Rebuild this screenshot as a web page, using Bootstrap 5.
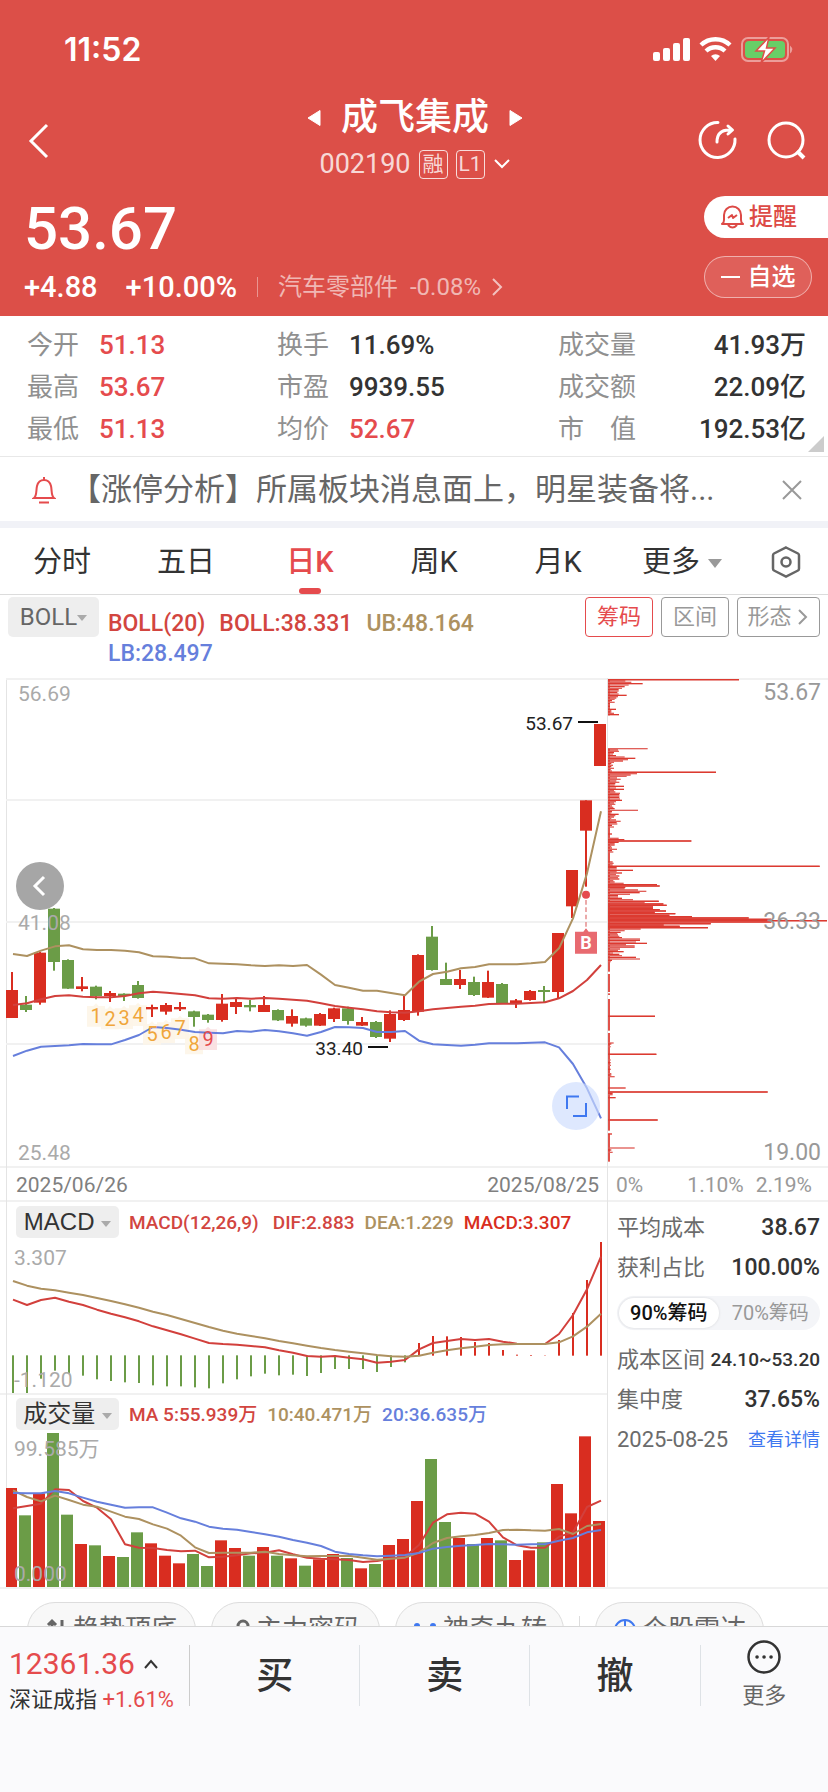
<!DOCTYPE html>
<html lang="zh-CN">
<head>
<meta charset="utf-8">
<meta name="viewport" content="width=device-width, initial-scale=1">
<title>成飞集成 002190</title>
<link rel="stylesheet" href="https://cdn.jsdelivr.net/npm/bootstrap@5.3.0/dist/css/bootstrap.min.css">
<style>
:root{--up:#e54b4d;--brand:#dc4f48;--gold:#ad9160;--blue:#667fdc;--line:#f1f1f1}
body{font-family:Roboto,"Noto Sans CJK SC",sans-serif;color:#333;background:#fff;line-height:1.2}
button{font-family:inherit}
svg{display:block;flex-shrink:0}
.plain{background:none;border:0;padding:0;color:inherit}
.t-up{color:var(--up)}.t-red{color:#d2453f}.t-gold{color:var(--gold)}.t-blue{color:var(--blue)}
.t-hist{color:#d92d20}
.scroller{min-height:0;overflow-y:auto;scrollbar-width:none}
.scroller::-webkit-scrollbar{display:none}
/* header */
.quote-head{background:var(--brand);color:#fff;height:316px}
.status{height:92px;padding:8px 34px 0 64px}
.clock{font:600 32px/38px Inter,sans-serif}
.navline{height:92px;padding:0 22px 0 24px}
.side{flex:1 1 0}
.stock{font-size:37px;line-height:44px;font-weight:500}
.code{font-size:27px;line-height:32px;color:rgba(255,255,255,.8)}
.tagbox{width:29px;height:29px;border:1px solid rgba(255,255,255,.8);border-radius:4px;font-size:21px;line-height:26px;text-align:center}
.price{font-size:60px;line-height:66px;font-weight:500}
.chg{font-size:29px;line-height:34px;font-weight:500}
.sector{font-size:24px;line-height:34px;color:rgba(255,255,255,.6);text-decoration:none}
.vbar{width:1px;height:20px;background:rgba(255,255,255,.4);margin:0 20px}
.sidebtns{gap:18px}
.pillbtn{height:42px;font-size:24px;line-height:40px;font-weight:500}
.remind{width:124px;background:#fff;color:#dd4a46;border-radius:21px 0 0 21px;border:0;padding:0 0 0 16px}
.fav{width:108px;background:rgba(255,255,255,.1);color:#fff;border:1px solid rgba(255,255,255,.5);border-radius:21px;margin-right:16px;padding:0}
/* figures */
.figures{height:141px;padding:8px 22px 0 27px;border-bottom:1px solid #e8e8e8;font-size:26px;line-height:42px}
.figures table{width:100%;table-layout:fixed}
.figures th{font-weight:400;color:#909090;padding:0;text-align:left}
.figures td{font-weight:500;padding:0}
.c-label{width:72px}.c-mid{width:178px}.c-wide{width:209px}.c-label3{width:90px}
.corner{right:4px;bottom:4px;border:8px solid transparent;border-right-color:#ccc;border-bottom-color:#ccc}
.notice{height:71px;border-bottom:7px solid #f1f2f7;padding:2px 26px 0 32px;font-size:31px;color:#666}
.notice-text{margin-left:14px}
.tabs{height:67px;border-bottom:1px solid #dcdcdc;font-size:29px}
.tabs button{flex:124 1 0;position:relative;padding-top:2px}
.tabs .gear{flex:84 1 0}
.tabs .on::after{content:"";position:absolute;left:50%;bottom:0;width:22px;height:6px;margin-left:-11px;border-radius:3px;background:var(--up)}
.caret{display:inline-block;border:5px solid transparent;border-top:6px solid #aaa;border-bottom:0}
.caret.big{border-width:9px 7px 0;border-top-color:#999}
/* indicator line */
.indic{height:83px;padding:2px 8px 0}
.pick{background:#eee;border:0;border-radius:5px;color:#666}
.boll{width:91px;height:40px;font-size:24px;padding:0}
.vals{font-size:23px;line-height:30px;font-weight:500;padding:12px 0 0 9px}
.vals-row{gap:14px}
.modes button{height:40px;width:68px;font-size:22px;background:#fff;border:1px solid #999;border-radius:4px;color:#999;padding:0}
.modes .on{border-color:var(--up);color:var(--up)}
.modes .wide{width:83px}
/* charts */
.board{display:grid;grid-template-columns:607fr 221fr}
.board svg.plot{width:100%;height:auto}
.rightcol{border-left:1px solid #e4e4e4}
.inner-left{position:relative}
.inner-left::before{content:"";position:absolute;left:6px;top:0;bottom:0;border-left:1px solid #e4e4e4}
.axis{position:absolute;font-size:21px;line-height:24px;color:#aaa}
.at-l{left:18px}.at-s{left:14px}.at-top{top:4px}.at-mid{top:233px}.at-bot{bottom:1px}
.chip .axis{color:#999;right:7px;font-size:23px;line-height:26px}
.chip .at-top{top:2px}
.chip .at-mid{top:231px}
.chip .at-bot{bottom:0}
.dates{height:36px;font-size:21px;color:#808080;border-top:2px solid var(--line);border-bottom:2px solid var(--line);padding-top:4px}
.chip-scale{color:#999}
.panelhead{height:40px;padding-left:16px;font-size:19px;font-weight:500;white-space:nowrap}
.panelhead .pick{height:32px;width:103px;font:24px/30px "Liberation Sans","Noto Sans CJK SC",sans-serif;color:#333;padding:0}
.panelhead span.val{padding:2px 0 0 10px}
.round{position:absolute;width:48px;height:48px;border-radius:50%}
.goback{left:16px;background:#a6a6a6;top:184px}
.expand{left:552px;top:404px;background:rgba(205,220,253,.65)}
.rule-t{border-top:2px solid var(--line)}
.cost{padding:6px 8px 0 9px;font-size:22px}
.cost .item{height:40px;color:#6b6b6b}
.cost .num{font-size:23px;font-weight:500;color:#333}
.cost .num.sm{font-size:19px}
.seg{height:34px;border-radius:17px;background:#f4f5f8;margin:8px 0 10px}
.seg button{flex:1 1 0;font-size:20px;color:#999;border-radius:16px}
.seg .on{background:#fff;color:#111;box-shadow:0 0 3px rgba(0,0,0,.12);margin:2px;font-weight:500}
.detail{font-size:18px;color:#3f78f0;text-decoration:none}
.tools{padding:13px 27px;gap:15px;font-size:26px;border-top:2px solid var(--line)}
.tools button{height:56px;width:169px;border:1px solid #ddd;border-radius:28px;background:#f8f8f8;color:#666;padding:0;gap:5px}
.tools .sep{width:1px;height:40px;background:#ddd;margin:14px 0}
/* footer */
.dock{height:166px;background:#fafafc;border-top:1px solid #d8d8d8;padding-top:18px}
.dock .cell{height:61px;border-right:1px solid #ccc;flex:170 1 0}
.dock .idx{flex:181 1 0;padding-left:9px}
.dock .more{flex:128 1 0;border:0;height:80px}
.idxnum{font-size:30px;line-height:38px}
.idxname{font-size:22px;line-height:34px}
.trade{font-size:37px;font-weight:500;color:#333}
.dock .trade{padding-top:4px}
.more svg{margin-top:-6px}
.more .idxname{margin-top:4px;color:#666}
</style>
</head>
<body>
<div class="d-flex flex-column vh-100 overflow-hidden">
<main class="scroller flex-grow-1">
<header class="quote-head">
  <div class="status d-flex align-items-center justify-content-between">
    <span class="clock">11:52</span>
    <svg width="143" height="28" viewBox="0 0 143 28" fill="none">
      <g fill="#fff"><rect x="2" y="16" width="7" height="9" rx="2"/><rect x="12" y="12" width="7" height="13" rx="2"/><rect x="22" y="7" width="7" height="18" rx="2"/><rect x="32" y="2" width="7" height="23" rx="2"/></g>
      <path d="M50 9a21 21 0 0 1 29 0M55 15a14 14 0 0 1 19 0" stroke="#fff" stroke-width="4.4"/><path d="M60 20a7 7 0 0 1 9 0L64.500 25z" fill="#fff"/>
      <rect x="91" y="2" width="46" height="23" rx="6" stroke="#fff" stroke-opacity=".45" stroke-width="2"/><rect x="94" y="5" width="40" height="17" rx="4" fill="#68ce67"/><path d="M139 9.500q4.500 4 0 8z" fill="#fff" fill-opacity=".45"/>
      <path d="M118 1l-13 14h8.500L110 27l14-15h-8.500z" fill="#fff" stroke="#dc4f48" stroke-width="1.500"/>
    </svg>
  </div>
  <div class="navline d-flex align-items-center">
    <div class="side pt-2"><button class="plain" aria-label="返回"><svg width="30" height="40" viewBox="0 0 30 40" fill="none" stroke="#fff" stroke-width="3"><path d="M23 5L7 21l16 16"/></svg></button></div>
    <div class="text-center">
      <div class="d-flex align-items-center justify-content-center gap-3">
        <svg width="20" height="18"><path d="M3 9L15 1.500V16.500z" fill="#fff" stroke="#fff" stroke-linejoin="round"/></svg>
        <span class="stock">成飞集成</span>
        <svg width="20" height="18"><path d="M17 9L5 1.500V16.500z" fill="#fff" stroke="#fff" stroke-linejoin="round"/></svg>
      </div>
      <div class="code d-flex align-items-center justify-content-center gap-2 mt-2">
        <span>002190</span><span class="tagbox">融</span><span class="tagbox">L1</span>
        <svg width="18" height="16" fill="none" stroke="#fff" stroke-width="2"><path d="M2 4l7 7 7-7"/></svg>
      </div>
    </div>
    <div class="side d-flex justify-content-end gap-4">
      <button class="plain" aria-label="分享"><svg width="44" height="44" viewBox="0 0 44 44" fill="none" stroke="#fff" stroke-width="3" stroke-linecap="round" stroke-linejoin="round"><path d="M24 6.500A17.500 17.500 0 1 0 41 23"/><path d="M23 26c0-8 4-12 12-12h3M34 10l4.500 4-4.500 4"/></svg></button>
      <button class="plain" aria-label="搜索"><svg width="44" height="44" viewBox="0 0 44 44" fill="none" stroke="#fff" stroke-width="3"><circle cx="24" cy="24" r="17"/><path d="M35 35l7 7" stroke-width="4"/></svg></button>
    </div>
  </div>
  <div class="d-flex justify-content-between">
    <div class="ps-4 pt-2">
      <div class="price mt-1">53.67</div>
      <div class="d-flex align-items-center mt-2">
        <span class="chg">+4.88</span><span class="chg ms-4 ps-1">+10.00%</span><span class="vbar"></span>
        <a class="sector d-flex align-items-center" href="#">汽车零部件&nbsp; -0.08%<svg class="ms-2" width="16" height="20" fill="none" stroke="#fff" stroke-opacity=".65" stroke-width="2"><path d="M4 2l8 8-8 8"/></svg></a>
      </div>
    </div>
    <div class="sidebtns d-flex flex-column pt-2 mt-1">
      <button class="pillbtn remind d-flex align-items-center gap-1"><svg width="25" height="26" viewBox="0 0 25 26" fill="none" stroke="#dd4a46" stroke-width="2" stroke-linejoin="round"><path d="M2 20q2-1 2-4v-5a8.500 8.500 0 0 1 17 0v5q0 3 2 4zM8 21q4.500 5 9 0M8 14l4-3 1 3 4-3"/></svg>提醒</button>
      <button class="pillbtn fav d-flex align-items-center justify-content-center gap-2"><svg width="19" height="4"><path d="M0 2h19" stroke="#fff" stroke-width="2"/></svg>自选</button>
    </div>
  </div>
</header>

<section class="figures position-relative">
  <table>
    <colgroup><col class="c-label"><col class="c-mid"><col class="c-label"><col class="c-wide"><col class="c-label3"><col></colgroup>
    <tr><th>今开</th><td class="t-up">51.13</td><th>换手</th><td>11.69%</td><th>成交量</th><td class="text-end">41.93万</td></tr>
    <tr><th>最高</th><td class="t-up">53.67</td><th>市盈</th><td>9939.55</td><th>成交额</th><td class="text-end">22.09亿</td></tr>
    <tr><th>最低</th><td class="t-up">51.13</td><th>均价</th><td class="t-up">52.67</td><th>市　值</th><td class="text-end">192.53亿</td></tr>
  </table>
  <span class="corner position-absolute"></span>
</section>

<section class="notice d-flex align-items-center">
  <svg width="24" height="28" viewBox="0 0 24 28" fill="none" stroke="#e54b4d" stroke-width="2"><path d="M2 22c3-2 2-8 3-12 1-4 4-6 7-6s6 2 7 6c1 4 0 10 3 12zM12 4V1M7 26.500h10"/></svg>
  <span class="notice-text flex-grow-1 text-truncate">【涨停分析】所属板块消息面上，明星装备将...</span>
  <button class="plain" aria-label="关闭"><svg width="20" height="20" stroke="#999" stroke-width="2"><path d="M1 1l18 18M19 1L1 19"/></svg></button>
</section>

<nav class="tabs d-flex">
  <button class="plain">分时</button><button class="plain">五日</button><button class="plain on t-up fw-medium">日K</button><button class="plain">周K</button><button class="plain">月K</button>
  <button class="plain">更多<span class="caret big ms-2 align-middle"></span></button>
  <button class="plain gear" aria-label="设置"><svg class="mx-auto" width="32" height="34" viewBox="0 0 32 34" fill="none" stroke="#666" stroke-width="2.500"><path d="M16 2.500L28 8.500q1 .5 1 2v13q0 1.500-1 2L16 31.500 4 25.500q-1-.5-1-2v-13q0-1.500 1-2z"/><circle cx="16" cy="17" r="4.500"/></svg></button>
</nav>

<section class="indic d-flex align-items-start">
  <button class="pick boll">BOLL<span class="caret align-middle"></span></button>
  <div class="vals flex-grow-1"><div class="vals-row d-flex"><span class="t-red">BOLL(20)</span><span class="t-red">BOLL:38.331</span><span class="t-gold">UB:48.164</span></div><div class="t-blue">LB:28.497</div></div>
  <div class="modes d-flex gap-2"><button class="on">筹码</button><button>区间</button><button class="wide d-flex align-items-center justify-content-center">形态<svg class="ms-1" width="14" height="18" fill="none" stroke="#999" stroke-width="2"><path d="M3 2l7 7-7 7"/></svg></button></div>
</section>

<section class="board">
  <div class="inner-left">
    <div class="position-relative">
      <svg class="plot" id="priceChart" viewBox="0 0 607 488"></svg>
      <span class="axis at-l at-top">56.69</span>
      <span class="axis at-l at-mid">41.08</span>
      <span class="axis at-l at-bot">25.48</span>
      <button class="round goback plain" aria-label="更早"><svg width="48" height="48" fill="none" stroke="#fff" stroke-width="3"><path d="M28 15l-9 9 9 9"/></svg></button>
      <button class="round expand plain" aria-label="全屏"><svg width="48" height="48" fill="none" stroke="#3f78f0" stroke-width="2"><path d="M15 27V14.500H27M21 34H34V21"/></svg></button>
    </div>
    <div class="dates d-flex align-items-center justify-content-between ps-3 pe-2"><span>2025/06/26</span><span>2025/08/25</span></div>
    <div class="panelhead d-flex align-items-center">
      <button class="pick">MACD <span class="caret align-middle"></span></button>
      <span class="val t-red">MACD(12,26,9)</span><span class="val t-red ms-1">DIF:2.883</span><span class="val t-gold">DEA:1.229</span><span class="val t-hist">MACD:3.307</span>
    </div>
    <div class="position-relative">
      <svg class="plot" id="macdChart" viewBox="0 0 607 151"></svg>
      <span class="axis at-s at-top">3.307</span><span class="axis at-s at-bot">-1.120</span>
    </div>
    <div class="panelhead rule-t d-flex align-items-center">
      <button class="pick">成交量 <span class="caret align-middle"></span></button>
      <span class="val t-red">MA 5:55.939万</span><span class="val t-gold">10:40.471万</span><span class="val t-blue">20:36.635万</span>
    </div>
    <div class="position-relative">
      <svg class="plot" id="volChart" viewBox="0 0 607 154"></svg>
      <span class="axis at-s at-top">99.585万</span><span class="axis at-s at-bot">0.000</span>
    </div>
  </div>

  <div class="rightcol">
    <div class="chip position-relative">
      <svg class="plot" id="chipChart" viewBox="0 0 220 488"></svg>
      <span class="axis at-top">53.67</span><span class="axis at-mid">36.33</span><span class="axis at-bot">19.00</span>
    </div>
    <div class="dates chip-scale d-flex align-items-center ps-2"><span class="me-auto">0%</span><span class="me-2 pe-1">1.10%</span><span class="me-3">2.19%</span></div>
    <div class="cost">
      <div class="item d-flex align-items-center justify-content-between"><span>平均成本</span><span class="num">38.67</span></div>
      <div class="item d-flex align-items-center justify-content-between"><span>获利占比</span><span class="num">100.00%</span></div>
      <div class="seg d-flex"><button class="plain on">90%筹码</button><button class="plain">70%筹码</button></div>
      <div class="item d-flex align-items-center justify-content-between"><span>成本区间</span><span class="num sm">24.10~53.20</span></div>
      <div class="item d-flex align-items-center justify-content-between"><span>集中度</span><span class="num">37.65%</span></div>
      <div class="item d-flex align-items-center justify-content-between"><span>2025-08-25</span><a class="detail" href="#">查看详情</a></div>
    </div>
  </div>
</section>

<div class="tools d-flex">
  <button class="d-flex align-items-center justify-content-center"><svg width="22" height="24" fill="none" stroke="#666" stroke-width="3"><path d="M6 20V4M2 7l4-4 4 4M16 2v16M12 14l4 5 4-5"/></svg>趋势顶底</button>
  <button class="d-flex align-items-center justify-content-center"><svg width="20" height="24" fill="none" stroke="#666" stroke-width="3"><circle cx="12" cy="8" r="5"/><path d="M12 13v9M12 19h5"/></svg>主力密码</button>
  <button class="d-flex align-items-center justify-content-center"><svg width="26" height="24" fill="#3f78f0"><circle cx="5" cy="8" r="3"/><circle cx="21" cy="8" r="3"/><path d="M5 9l8 8 8-8" fill="none" stroke="#3f78f0" stroke-width="3"/></svg>神奇九转</button>
  <span class="sep"></span>
  <button class="d-flex align-items-center justify-content-center"><svg width="24" height="24" fill="none" stroke="#3f78f0" stroke-width="2"><circle cx="12" cy="12" r="10"/><path d="M12 2v12M6 12h12"/></svg>个股雷达</button>
</div>
</main>

<footer class="dock d-flex align-items-start flex-shrink-0">
  <div class="cell idx"><div class="idxnum t-up d-flex align-items-center gap-2">12361.36<svg width="16" height="12" fill="none" stroke="#333" stroke-width="2"><path d="M2 10l6-7 6 7"/></svg></div><div class="idxname text-nowrap">深证成指 <span class="t-up">+1.61%</span></div></div>
  <button class="plain cell trade border-end">买</button>
  <button class="plain cell trade border-end">卖</button>
  <button class="plain cell trade border-end">撤</button>
  <button class="plain cell more d-flex flex-column align-items-center justify-content-start"><svg width="36" height="36" viewBox="0 0 36 36" fill="none" stroke="#333" stroke-width="2.500"><circle cx="18" cy="18" r="15.500"/><path d="M11 18h.1M18 18h.1M25 18h.1" stroke-linecap="round" stroke-width="3.500"/></svg><span class="idxname">更多</span></button>
</footer>
</div>

<script src="https://cdn.jsdelivr.net/npm/bootstrap@5.3.0/dist/js/bootstrap.bundle.min.js"></script>
<script>
const RED='#d92d20', GREEN='#6b9c47', GOLD='#ad9160', BLUE='#667fdc', MID='#d2403c';
// Shapes use a grid of three units per pixel, one slot of 42 units per trading day.
const rect=(x,y,w,h,f)=>`<rect x="${x}" y="${y}" width="${w}" height="${h}" fill="${f}"/>`;
const line=(v,c)=>`<polyline fill="none" stroke="${c}" stroke-width="6" stroke-linejoin="round" points="${v.map((y,i)=>(39+42*i)+','+y).join(' ')}"/>`;
const layer=(dy,s)=>`<g transform="scale(.333333) translate(0 ${dy})">${s}</g>`;
const put=(id,s)=>document.getElementById(id).innerHTML=s;
const grid=(ys,w)=>ys.map(y=>`<path d="M6 ${y}H${w}" stroke="#f1f1f1" stroke-width="2"/>`).join('');

// [rise?, high, body top, body bottom, low]
const K=[[1,906,960,1044,1044],[0,978,1004,1020,1026],[1,846,848,998,1004],[0,714,716,876,902],[0,868,870,956,957],[1,921,949,957,964],[0,947,950,978,988],[1,963,969,978,996],[0,970,971,978,993],[0,933,945,984,986],[1,1004,1011,1018,1041],[1,999,1005,1025,1034],[1,996,1011,1018,1023],[0,1022,1024,1041,1070],[0,1032,1034,1050,1058],[1,972,1001,1050,1055],[1,987,996,1011,1032],[0,990,1005,1012,1024],[1,978,1005,1026,1026],[0,1018,1020,1051,1053],[1,1018,1038,1061,1070],[0,1043,1045,1067,1070],[1,1029,1032,1067,1068],[1,1013,1015,1047,1056],[0,1010,1015,1053,1064],[1,1041,1056,1067,1068],[0,1053,1056,1101,1104],[1,1021,1032,1106,1116],[1,975,1020,1050,1053],[1,853,855,1025,1037],[0,768,800,900,902],[0,878,927,945,945],[1,900,927,945,957],[0,920,936,975,978],[1,902,936,983,984],[0,939,942,999,1000],[1,987,991,999,1014],[1,960,963,990,992],[0,948,960,966,996],[1,789,789,966,987],[1,600,600,709,744],[1,391,391,482,650],[1,162,162,288,288]];
const UB=[852,858,842,829,826,838,840,840,842,847,859,860,864,865,880,881,883,886,888,886,888,885,914,945,953,962,962,969,976,935,912,905,895,891,883,883,883,880,876,835,745,610,424];
const MB=[1005,1000,988,978,976,980,982,982,978,970,965,968,972,976,985,986,984,986,984,986,989,992,1000,1008,1013,1018,1024,1027,1028,1024,1018,1014,1010,1007,1002,1001,1001,999,997,985,963,930,885];
const LB=[1158,1142,1130,1128,1126,1122,1123,1123,1110,1095,1071,1074,1079,1086,1088,1090,1083,1085,1080,1084,1090,1097,1086,1071,1072,1074,1086,1086,1083,1112,1123,1125,1127,1124,1120,1120,1120,1118,1117,1132,1182,1255,1345];
let s=K.map(([r,h,t,b,l],i)=>{const c=r?RED:GREEN,x=36+42*i;return rect(x-3,h,6,l-h,c)+rect(x-18,t,36,b-t,c)}).join('');
const marks=[1038,1046,1045,1036,1092,1087,1075,1121,1108];
let boxes='',nums='';
marks.forEach((y,i)=>{const x=288+42*i,last=i===8;
  boxes+=`<path d="M${x-27} ${y-30}h19l8-8 8 8h19v62h-54z" fill="${last?'#f9dfe0':'#fdf5e8'}" fill-opacity=".9"/>`;
  nums+=`<text x="${Math.round(x/3)}" y="${Math.round(y/3)-1}" text-anchor="middle" font-size="20" fill="${last?'#e54b4d':'#f0a63c'}">${i+1}</text>`});
put('priceChart',grid([1,122,244,366],607)+layer(-24,boxes+s+line(UB,GOLD)+line(MB,MID)+line(LB,BLUE)
  +'<path d="M1758 690v90" stroke="#e89a9a" stroke-width="5" stroke-dasharray="14 8"/><circle cx="1758" cy="674" r="12" fill="#e54b4d"/><path d="M1725 785h25l8-10 8 10h25v66h-66z" fill="#e86a70"/><path d="M1734 156h60M1104 1131h60" stroke="#111" stroke-width="6"/>')
  +`<g>${nums}</g><text x="586" y="271" text-anchor="middle" font-size="18" font-weight="700" fill="#fff">B</text>`
  +'<text x="573" y="52" text-anchor="end" font-size="19" fill="#222">53.67</text><text x="363" y="377" text-anchor="end" font-size="19" fill="#222">33.40</text>');

const H=[699,702,655,631,640,646,657,662,666,668,675,678,678,681,684,669,657,648,640,645,643,647,638,626,626,626,635,620,606,549,528,529,531,546,549,570,584,585,586,540,459,360,246];
const DIF=[419,435,420,413,425,435,449,461,472,484,499,511,523,536,549,552,554,558,562,571,578,588,590,588,593,598,608,605,600,568,549,543,537,540,537,545,551,552,552,522,465,388,290];
const DEA=[363,377,386,391,398,405,414,423,433,443,455,465,477,489,501,512,521,528,535,543,550,557,564,570,575,580,585,589,590,587,578,571,565,560,555,553,552,552,552,547,529,500,461];
put('macdChart',layer(-246,H.map((y,i)=>rect(36+42*i,Math.min(y,586),6,Math.abs(y-586)+1,y>586?GREEN:RED)).join('')+line(DIF,MID)+line(DEA,GOLD)));

const V=[984,1066,1000,819,1064,1152,1156,1188,1191,1117,1150,1187,1210,1182,1218,1141,1164,1187,1161,1187,1195,1217,1198,1182,1194,1225,1212,1155,1137,1023,897,1086,1134,1152,1134,1141,1200,1171,1147,972,1060,829,1083];
const M5=[1045,1038,1031,988,990,1023,1043,1078,1153,1163,1164,1170,1174,1172,1192,1190,1186,1180,1178,1171,1183,1193,1196,1198,1200,1206,1203,1196,1190,1155,1088,1063,1058,1061,1085,1132,1156,1163,1163,1130,1117,1041,1022];
const M10=[991,1011,1024,1007,1020,1034,1040,1055,1070,1077,1093,1106,1127,1162,1179,1178,1178,1178,1175,1182,1186,1189,1188,1188,1187,1193,1199,1196,1193,1178,1149,1134,1129,1125,1119,1110,1109,1111,1112,1107,1122,1098,1092];
const M20=[999,1000,1000,993,1000,1013,1025,1034,1043,1042,1042,1058,1075,1085,1100,1106,1109,1116,1123,1130,1140,1148,1158,1175,1182,1186,1189,1187,1185,1179,1166,1161,1157,1155,1152,1153,1154,1153,1152,1142,1134,1117,1110];
put('volChart',layer(-819,V.map((y,i)=>rect(i?15+42*i:18,y,i?36:33,1281-y,K[i][0]?RED:GREEN)).join('')+line(M5,MID)+line(M10,GOLD)+line(M20,BLUE)));

// Cost distribution: [depth, share]; plain stretches are filled with the minimum share.
const C=[29,393,33,52,37,70,41,104,45,62,50,50,55,42,59,32,63,32,67,28,72,32,76,56,80,30,84,25,88,20,92,12,97,20,101,6,105,6,109,6,113,6,118,24,122,10,126,10,130,18,134,33,236,119,240,30,244,33,248,18,252,15,257,24,261,50,265,82,269,60,273,45,277,18,281,10,286,15,290,10,295,18,299,8,303,12,307,324,311,87,315,68,319,56,324,27,328,38,333,25,337,34,341,22,345,20,349,48,354,24,358,48,362,18,366,22,370,36,374,34,378,34,382,34,387,36,391,42,395,24,399,18,403,22,408,12,412,16,416,20,421,90,425,12,429,10,433,32,437,22,441,18,445,10,450,24,454,38,458,26,462,28,466,12,471,18,492,12,505,32,509,49,513,250,517,32,521,20,525,20,529,10,534,12,538,27,542,12,546,16,576,14,580,17,585,14,589,635,593,26,597,26,601,75,605,26,609,42,613,24,618,34,623,30,627,34,632,16,636,20,640,47,644,147,648,155,652,52,656,50,660,90,664,115,668,95,673,66,677,30,681,30,685,42,689,75,694,152,698,110,702,166,706,176,711,135,715,135,719,155,723,174,727,140,731,202,736,184,740,252,744,422,748,490,752,657,756,490,761,308,765,167,769,215,773,300,777,98,782,50,787,38,791,28,795,30,799,34,803,42,807,96,811,96,816,84,820,117,824,54,828,80,832,80,837,36,841,30,845,47,849,15,853,34,857,42,862,84,867,96,871,12,875,8,1039,141,1119,17,1122,10,1130,8,1153,145,1170,8,1178,8,1186,9,1198,8,1211,10,1215,10,1220,20,1254,53,1266,479,1270,14,1274,14,1283,23,1350,149,1392,12,1434,80,1440,10,1447,14];
let c='';
[[27,136],[234,905],[912,966],[970,975],[987,1082],[1089,1382],[1391,1475]].forEach(([a,b])=>c+=rect(0,a,6,b-a,'#e0524a'));
for(let i=0;i<C.length;i+=2)c+=rect(0,C[i]-2,C[i+1],4,(i/2)%2?'#dc3a30':'#e0605a');
for(let i=0;i<C.length;i+=2)if(C[i+1]>130)c+=rect(0,C[i]-2,C[i+1],4,'#dc3a30');
put('chipChart','<path d="M0 1H220" stroke="#f1f1f1" stroke-width="2"/>'+layer(-24,c));
</script>
</body>
</html>
